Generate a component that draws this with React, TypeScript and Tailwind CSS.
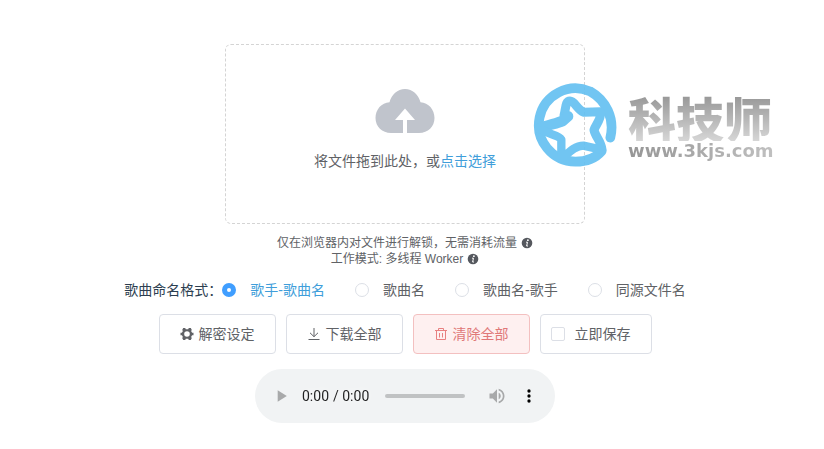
import React, { useState } from "react";

const formats = ["歌手-歌曲名", "歌曲名", "歌曲名-歌手", "同源文件名"];

function CloudUploadIcon() {
  return (
    <svg viewBox="0 0 60 44" className="h-11 w-15" aria-hidden="true">
      <path
        fill="#c0c4cc"
        d="M16 44C7 44 .5 37.500.5 29 .5 20.500 6.500 13.500 14.500 13.200 16.500 5.500 22.500 0 30 0s13.500 5.500 15.500 13.200C53.500 13.500 59.500 20.500 59.500 29S53 44 44 44H32V31h8L30 19.500 20 31h8v13z"
      />
    </svg>
  );
}

function InfoIcon() {
  return (
    <svg viewBox="0 0 12 12" className="size-3" aria-hidden="true">
      <circle cx="6" cy="6" r="5.300" fill="#55585e" />
      <circle cx="6.900" cy="3.200" r=".9" fill="#fff" />
      <path d="M5 5.200h1.500L5.600 9H7" fill="none" stroke="#fff" strokeWidth="1" />
    </svg>
  );
}

function GearIcon() {
  return (
    <svg viewBox="0 0 14 14" className="size-3.5" aria-hidden="true">
      <path
        fill="#606266"
        fillRule="evenodd"
        d="M3.200 1h2l.6 1.200h2.400L8.800 1h2l1 1.900-.7 1.200 1 1.700h1.400v2.400h-1.400l-1 1.700.7 1.200-1 1.900h-2l-.6-1.200H5.800L5.200 13h-2l-1-1.900.7-1.200-1-1.700H.5V5.800h1.400l1-1.700-.7-1.200zM7 4.200a2.800 2.800 0 1 0 0 5.600 2.800 2.800 0 0 0 0-5.600z"
      />
    </svg>
  );
}

function DownloadIcon() {
  return (
    <svg viewBox="0 0 14 14" className="size-3.5" fill="none" stroke="#606266" aria-hidden="true">
      <path d="M7 1v8.500M3 5.800l4 3.900 4-3.900M1.500 12.500h11" />
    </svg>
  );
}

function TrashIcon() {
  return (
    <svg viewBox="0 0 14 14" className="size-3.5" fill="none" stroke="#e88080" aria-hidden="true">
      <path d="M1 3.500h12M4.500 3.500v-2h5v2M2.500 3.500v9h9v-9M5.500 6v4.500M8.500 6v4.500" />
    </svg>
  );
}

function Watermark() {
  return (
    <div className="pointer-events-none absolute top-[75px] left-[520px] flex">
      <svg viewBox="0 0 330 300" className="h-[100px] w-[110px] opacity-90" fill="none" stroke="#62bff1" strokeLinecap="round" strokeLinejoin="round" aria-hidden="true">
        <path strokeWidth="29" d="M271 188C285 130 258 76 210 49A110 110 0 1 0 166 260C198 260 228 248 245 228" />
        <path strokeWidth="27" d="M132 122C138 98 136 78 150 78 164 78 172 104 192 112L242 110C244 135 226 150 222 165 226 185 244 200 246 224" />
        <path strokeWidth="32" d="M60 160C85 150 108 146 128 138L144 124" />
        <path strokeWidth="25" d="M68 166C90 180 116 180 124 194V250M132 246C150 228 168 212 190 212L244 224" />
      </svg>
      <div className="-ml-0.5 flex flex-col pt-[18px] font-bold">
        <span className="bg-linear-to-b from-[#949494] to-[#d6d6d6] bg-clip-text font-['Noto_Sans_CJK_SC',sans-serif] text-5xl leading-12 font-black text-transparent">科技师</span>
        <span className="bg-linear-to-r from-[#969696] to-[#c0c0c0] bg-clip-text pt-0.5 pb-1 font-['DejaVu_Sans',sans-serif] text-lg leading-4 text-transparent">www.3kjs.com</span>
      </div>
    </div>
  );
}

export default function App() {
  const [format, setFormat] = useState(formats[0]);
  const button = "flex h-10 items-center gap-[5px] rounded-sm border px-5 text-sm";

  return (
    <main className="relative flex flex-col items-center bg-white pt-11 pr-3.5 font-['Liberation_Sans','Noto_Sans_CJK_SC',sans-serif] text-sm text-[#606266]">
      <label className="flex h-[180px] w-[360px] cursor-pointer flex-col items-center rounded-md border border-dashed border-[#d4d4d4] pt-11">
        <CloudUploadIcon />
        <span className="mt-4.5 leading-5">
          将文件拖到此处，或<em className="text-[#409eda] not-italic">点击选择</em>
        </span>
        <input type="file" multiple className="sr-only" />
      </label>

      <div className="mt-[11px] flex flex-col items-center text-xs leading-4">
        <p className="flex items-center gap-1">仅在浏览器内对文件进行解锁，无需消耗流量<InfoIcon /></p>
        <p className="flex items-center gap-1">工作模式: 多线程 Worker<InfoIcon /></p>
      </div>

      <div role="radiogroup" aria-labelledby="format-label" className="mt-[13px] flex items-center leading-5">
        <span id="format-label" className="text-[#2c3e50]">歌曲命名格式：</span>
        <div className="flex items-center gap-[30px]">
          {formats.map((name) => (
            <label key={name} className={`flex cursor-pointer items-center gap-3.5 ${format === name ? "text-[#409eda]" : ""}`}>
              <input
                type="radio"
                name="format"
                checked={format === name}
                onChange={() => setFormat(name)}
                className="size-3.5 appearance-none rounded-full border border-[#dcdfe6] bg-white checked:border-5 checked:border-[#409eff]"
              />
              {name}
            </label>
          ))}
        </div>
      </div>

      <div className="mt-3.5 flex gap-2.5">
        <button type="button" className={`${button} border-[#dcdfe6]`}><GearIcon />解密设定</button>
        <button type="button" className={`${button} border-[#dcdfe6]`}><DownloadIcon />下载全部</button>
        <button type="button" className={`${button} border-[#f3c0c0] bg-[#fef0f0] text-[#e07878]`}><TrashIcon />清除全部</button>
        <label className="flex h-10 cursor-pointer items-center gap-2.5 rounded-sm border border-[#dcdfe6] pr-5 pl-2.5">
          <input type="checkbox" className="size-3.5 appearance-none rounded-xs border border-[#dcdfe6] checked:bg-[#409eff]" />
          立即保存
        </label>
      </div>

      <audio controls className="mt-[15px] h-[54px] w-[300px]" />
      <Watermark />
    </main>
  );
}
